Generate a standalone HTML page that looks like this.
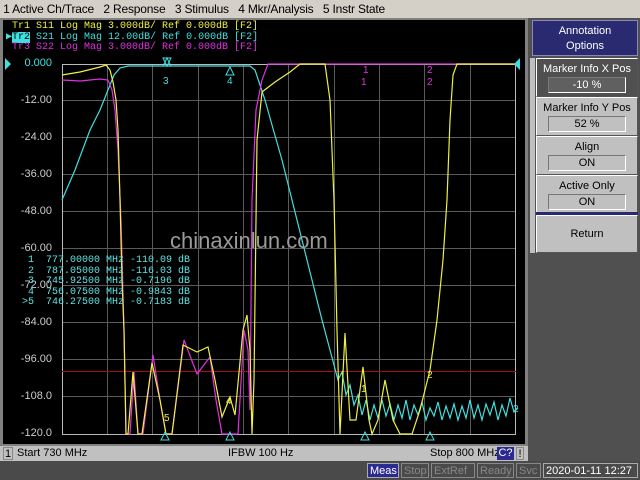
<!DOCTYPE html>
<html><head><style>
body{margin:0;width:640px;height:480px;background:#d4d0c8;overflow:hidden;position:relative;font-family:"Liberation Sans",sans-serif}
.a{position:absolute}
.m{font-family:"Liberation Mono",monospace;font-size:10px;white-space:pre;line-height:10px}
.y{position:absolute;left:0;width:52px;text-align:right;font-size:11px;line-height:12px;color:#ccc}
.btn{position:absolute;left:536px;width:102px;background:#c0c0c0;border:1px solid #fff;border-right-color:#555;border-bottom-color:#555;text-align:center;font-size:11px;color:#000;box-sizing:border-box}
.val{margin:2px auto 0;width:76px;height:14px;border:1px solid #777;border-right-color:#fff;border-bottom-color:#fff;line-height:14px}
.sb{position:absolute;top:463px;height:15px;font-size:11px;line-height:15px;color:#888;border:1px solid #888;padding:0 2px;box-sizing:border-box}
</style></head><body>
<div class="a" style="left:0;top:0;width:640px;height:18px;font-size:12px;line-height:18px;color:#000;letter-spacing:-0.2px">&nbsp;1 Active Ch/Trace &nbsp;&nbsp;2 Response &nbsp;&nbsp;3 Stimulus &nbsp;&nbsp;4 Mkr/Analysis &nbsp;&nbsp;5 Instr State</div>
<div class="a" style="left:0;top:18px;width:528px;height:428px;background:#808080"></div>
<div class="a" style="left:3px;top:20px;width:522px;height:424px;background:#000"></div>
<div class="a" style="left:528px;top:18px;width:112px;height:444px;background:#505050"></div>
<svg class="a" style="left:0;top:0" width="528" height="446">
<g stroke="#5a5a5a" stroke-width="1">
<path d="M107.5,64V434M152.5,64V434M198.5,64V434M243.5,64V434M288.5,64V434M334.5,64V434M379.5,64V434M424.5,64V434M470.5,64V434M62.5,100.5H516M62.5,137.5H516M62.5,174.5H516M62.5,211.5H516M62.5,248.5H516M62.5,285.5H516M62.5,322.5H516M62.5,359.5H516M62.5,396.5H516"/>
</g>
<rect x="62.5" y="64.5" width="453" height="370" fill="none" stroke="#bbb"/>
<path d="M62,371.5H516" stroke="#a01010"/>
<g fill="none" stroke-width="1.2">
<path stroke="#40e0e0" d="M62,200L75,170L90,130L100,110L108,90L114,75L120,68L128,66L250,66L255,70L259,82L265,100L272,125L282,160L292,200L302,240L312,280L322,320L330,350L334,365L338,380L342,372L346,395L350,385L354,405L358,395L362,415L366,400L370,420L374,405L378,418L382,400L386,416L390,404L394,420L398,405L402,418L406,400L410,420L414,405L418,415L422,402L426,420L430,408L434,416L438,402L442,420L446,406L450,418L454,404L458,420L462,406L466,418L470,400L474,418L478,405L482,420L486,404L490,415L494,402L498,420L502,405L506,416L510,398L514,412L518,408"/>
<path stroke="#e030e0" d="M62,80L80,81L100,79L108,80L112,90L115,110L118,150L121,220L124,330L126,434L130,434L134,372L138,434L143,434L153,355L160,400L166,434L172,434L184,340L197,374L210,357L216,400L222,434L238,434L244,330L248,350L250,410L252,200L256,110L262,80L268,64L518,64"/>
<path stroke="#f0f040" d="M62,75L80,72L100,67L106,65L110,70L113,82L116,100L118,130L120,200L122,280L124,330L126,434L128,434L133,372L138,434L142,434L152,363L160,400L166,434L172,434L183,345L197,352L208,347L215,380L222,417L230,397L235,415L243,330L247,315L250,350L252,434L254,380L257,140L262,92L275,82L290,72L300,64L325,64L330,100L334,200L337,330L340,434L345,333L350,420L356,420L363,367L369,420L372,434L378,420L385,380L393,420L400,434L412,434L420,410L430,370L437,320L443,260L447,200L450,120L453,75L457,64L518,64"/>
</g>
<g fill="none" stroke="#40e0e0"><path d="M163,58L171,58L167,66Z M163,66L171,66L167,58Z M226,75L234,75L230,67Z M161,440L169,440L165,432Z M226,440L234,440L230,432Z M361,440L369,440L365,432Z M426,440L434,440L430,432Z"/></g>
<path d="M5,58L11,64L5,70Z M520,58L514,64L520,70Z" fill="#40e0e0"/>
<g font-family="Liberation Sans" font-size="10" fill="#40e0e0"><text x="163" y="84">3</text><text x="227" y="84">4</text><text x="513" y="412">2</text></g>
<g font-family="Liberation Sans" font-size="10" fill="#e030e0"><text x="363" y="73">1</text><text x="427" y="73">2</text><text x="361" y="85">1</text><text x="427" y="85">2</text></g>
<g font-family="Liberation Sans" font-size="10" fill="#f0f040"><text x="361" y="392">1</text><text x="427" y="378">2</text><text x="226" y="404">4</text><text x="164" y="421">5</text></g>
</svg>
<div class="a m" style="left:12px;top:22px;color:#f0f040">Tr1 S11 Log Mag 3.000dB/ Ref 0.000dB [F2]</div>
<div class="a m" style="left:6px;top:33px;color:#40e0e0">▶<span style="background:#40e0e0;color:#000">Tr2</span> S21 Log Mag 12.00dB/ Ref 0.000dB [F2]</div>
<div class="a m" style="left:12px;top:43px;color:#e030e0">Tr3 S22 Log Mag 3.000dB/ Ref 0.000dB [F2]</div>
<div class="y" style="top:57px;color:#40e0e0">0.000</div>
<div class="y" style="top:94px">-12.00</div>
<div class="y" style="top:131px">-24.00</div>
<div class="y" style="top:168px">-36.00</div>
<div class="y" style="top:205px">-48.00</div>
<div class="y" style="top:242px">-60.00</div>
<div class="y" style="top:279px">-72.00</div>
<div class="y" style="top:316px">-84.00</div>
<div class="y" style="top:353px">-96.00</div>
<div class="y" style="top:390px">-108.0</div>
<div class="y" style="top:427px">-120.0</div>
<div class="a m" style="left:22px;top:256px;color:#60e0e0;line-height:10.5px;font-size:10px"> 1  777.00000 MHz -110.09 dB
 2  787.05000 MHz -116.03 dB
 3  745.92500 MHz -0.7196 dB
 4  756.07500 MHz -0.9843 dB
>5  746.27500 MHz -0.7183 dB</div>
<div class="a" style="left:170px;top:228px;font-size:22px;color:#9a9a9a">chinaxinlun.com</div>
<div class="a" style="left:532px;top:20px;width:106px;height:36px;background:#2a2a70;border:1px solid #8888bb;box-sizing:border-box;color:#fff;text-align:center;font-size:11px;line-height:15px;padding-top:3px">Annotation<br>Options</div>
<div class="a" style="left:530px;top:58px;width:5px;height:195px;background:#c0c0c0"></div>
<div class="btn" style="top:58px;height:39px;background:#505050;color:#fff;padding-top:4px">Marker Info X Pos<div class="val" style="background:#606060;color:#fff">-10 %</div></div>
<div class="btn" style="top:97px;height:39px;padding-top:4px">Marker Info Y Pos<div class="val">52 %</div></div>
<div class="btn" style="top:136px;height:39px;padding-top:4px">Align<div class="val">ON</div></div>
<div class="btn" style="top:175px;height:39px;padding-top:4px">Active Only<div class="val">ON</div></div>
<div class="a" style="left:536px;top:212px;width:102px;height:3px;background:#2a2a70"></div>
<div class="btn" style="top:215px;height:38px;line-height:36px">Return</div>
<div class="a" style="left:0;top:446px;width:528px;height:15px;background:#c0c0c0;font-size:11px;line-height:15px;color:#000">
<span class="a" style="left:3px;top:1px;width:10px;height:13px;border:1px solid #888;line-height:13px;text-align:center;box-sizing:border-box">1</span>
<span class="a" style="left:17px">Start 730 MHz</span><span class="a" style="left:228px">IFBW 100 Hz</span><span class="a" style="left:430px">Stop 800 MHz</span>
<span class="a" style="left:497px;top:1px;width:17px;height:13px;background:#2a2a90;color:#fff;line-height:13px;text-align:center">C?</span>
<span class="a" style="left:516px;top:1px;width:8px;height:13px;border:1px solid #888;line-height:12px;text-align:center;box-sizing:border-box">!</span></div>
<div class="a" style="left:0;top:461px;width:640px;height:19px;background:#4a4a4a"></div>
<div class="sb" style="left:367px;width:32px;background:#2a2a90;color:#fff;border-color:#aaa">Meas</div>
<div class="sb" style="left:401px;width:28px">Stop</div>
<div class="sb" style="left:431px;width:44px">ExtRef</div>
<div class="sb" style="left:477px;width:37px">Ready</div>
<div class="sb" style="left:516px;width:25px">Svc</div>
<div class="sb" style="left:543px;width:95px;color:#fff;border-color:#aaa">2020-01-11 12:27</div>
</body></html>
